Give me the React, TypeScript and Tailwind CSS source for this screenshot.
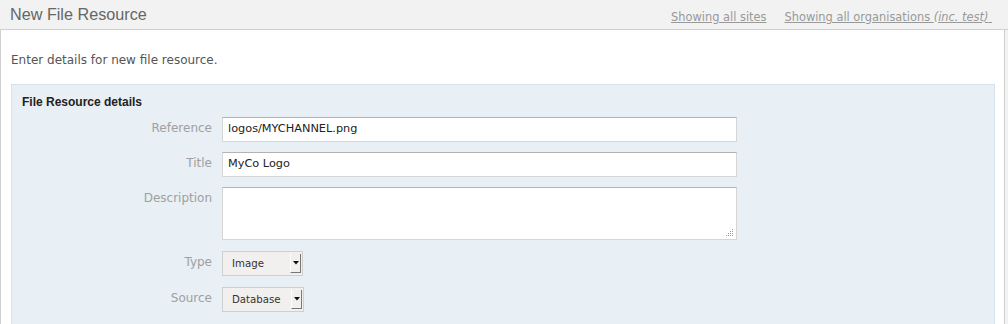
import React from "react";

const V = "font-['DejaVu_Sans',Verdana,sans-serif]";

function Grip() {
  return (
    <svg width="8" height="8" viewBox="0 0 8 8" className="absolute right-[2px] bottom-[2px]">
      {[
        [6, 0], [6, 2], [4, 2], [6, 4], [4, 4], [2, 4], [6, 6], [4, 6], [2, 6], [0, 6],
      ].map(([x, y], i) => (
        <rect key={i} x={x} y={y} width="1" height="1" fill="#9a9a9a" />
      ))}
    </svg>
  );
}

function Select({ value, w }: { value: string; w: string }) {
  return (
    <div className={`flex h-[25px] ${w} border border-[#cfcfcf] bg-[#f1f0ee]`}>
      <div className={`flex-1 flex items-center pl-[9px] text-[10.2px] text-[#333] ${V}`}>{value}</div>
      <div className="w-[11px] my-[2px] mr-[1px] flex items-center justify-center border-l border-l-white border-r border-r-[#777] border-b border-b-[#777] bg-[#f1f0ee]">
        <svg width="6" height="4" viewBox="0 0 6 4">
          <polygon points="0,0 6,0 3,3.5" fill="#111" />
        </svg>
      </div>
    </div>
  );
}

export default function App() {
  const label = `w-[210px] pr-[10px] text-right text-[12px] leading-[15px] text-[#a0a0a0] ${V}`;
  const input = `w-[515px] h-[25px] bg-white border border-[#d6d6d6] border-t-[#b3b3b3] pl-[5px] flex items-center text-[11.3px] text-[#222] ${V}`;
  return (
    <div className="w-[1008px] h-[324px] bg-[#f2f2f2] overflow-hidden">
      <div className="h-[30px] flex items-start justify-between border-b border-[#d0d0d0]">
        <div className="pl-[10px] pt-[4px] text-[16.2px] leading-[20px] text-[#666] font-['Liberation_Sans',Arial,sans-serif]">
          New File Resource
        </div>
        <div className={`flex gap-[18px] pr-[16px] pt-[10px] text-[11.4px] leading-[14px] text-[#999] ${V}`}>
          <span className="underline">Showing all sites</span>
          <span className="underline">
            Showing all organisations <i>(inc. test)</i>&nbsp;
          </span>
        </div>
      </div>
      <div className="w-[1005px] h-[300px] bg-white border-l border-r border-[#cfcfcf] pl-[10px] pr-[9px]">
        <div className={`pt-[23px] text-[12px] leading-[15px] text-[#555] ${V}`}>
          Enter details for new file resource.
        </div>
        <div className="mt-[16px] h-[300px] border border-[#d6e3ee] bg-[#e8eff5]">
          <div className="pl-[10px] pt-[10px] text-[12px] leading-[14px] font-bold text-[#222] font-['Liberation_Sans',Arial,sans-serif]">
            File Resource details
          </div>
          <div className="mt-[8px] flex flex-col">
            <div className="flex items-start">
              <div className={`${label} pt-[4px]`}>Reference</div>
              <div className={input}>logos/MYCHANNEL.png</div>
            </div>
            <div className="flex items-start mt-[10px]">
              <div className={`${label} pt-[4px]`}>Title</div>
              <div className={input}>MyCo Logo</div>
            </div>
            <div className="flex items-start mt-[10px]">
              <div className={`${label} pt-[4px]`}>Description</div>
              <div className="relative w-[515px] h-[53px] bg-white border border-[#d6d6d6] border-t-[#b3b3b3]">
                <Grip />
              </div>
            </div>
            <div className="flex items-start mt-[11px]">
              <div className={`${label} pt-[4px]`}>Type</div>
              <Select value="Image" w="w-[81px]" />
            </div>
            <div className="flex items-start mt-[11px]">
              <div className={`${label} pt-[4px]`}>Source</div>
              <Select value="Database" w="w-[82px]" />
            </div>
          </div>
        </div>
      </div>
    </div>
  );
}
